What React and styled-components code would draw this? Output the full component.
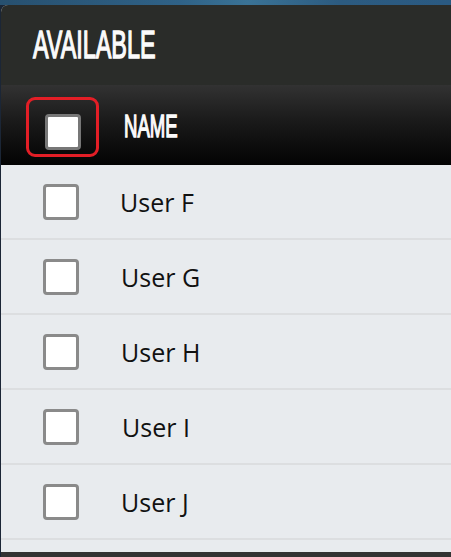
import React from 'react';
import styled, { createGlobalStyle } from 'styled-components';

const GlobalStyle = createGlobalStyle`
  html, body {
    margin: 0;
    padding: 0;
    background: #1b2636;
  }
  body {
    font-family: "Open Sans", "Liberation Sans", sans-serif;
    overflow: hidden;
  }
`;

const Page = styled.div`
  display: flex;
  flex-direction: column;
  width: 451px;
  height: 557px;
  overflow: hidden;
`;

const TopStrip = styled.div`
  height: 5px;
  flex: 0 0 5px;
  background: linear-gradient(90deg, #27506f 0%, #2f6287 40%, #3a7396 55%, #2c5b80 75%, #2a5a82 100%);
`;

const Panel = styled.div`
  display: flex;
  flex-direction: column;
  margin-left: 1px;
  border-top-left-radius: 7px;
  overflow: hidden;
  background: #e8ebee;
  flex: 1;
`;

const TitleBar = styled.div`
  height: 80px;
  display: flex;
  align-items: center;
  padding-left: 32px;
  background: #2a2c29;
`;

const Condensed = styled.span`
  display: inline-block;
  font-family: "Liberation Sans", Arial, sans-serif;
  font-weight: 400;
  color: #fbfbfb;
  -webkit-text-stroke: 1.4px #fbfbfb;
  white-space: nowrap;
  line-height: 1;
  transform-origin: left center;
  font-size: ${(p) => p.size}px;
  transform: scaleX(${(p) => p.squeeze});
`;

const HeaderRow = styled.div`
  height: 80px;
  display: flex;
  align-items: flex-start;
  background: linear-gradient(180deg, #323232 0%, #1a1a1a 45%, #030303 100%);
`;

const HeaderCheckCell = styled.div`
  position: relative;
  width: 36px;
  margin: 29px 0 0 44px;
`;

const HeaderLabel = styled.div`
  margin: 26px 0 0 43px;
`;

const Highlight = styled.span`
  position: absolute;
  top: -17px;
  left: -19px;
  right: -18px;
  bottom: -7px;
  border: 3px solid #e31e26;
  border-radius: 9px;
  pointer-events: none;
`;

const Box = styled.span`
  display: block;
  box-sizing: border-box;
  width: 36px;
  height: 36px;
  background: #ffffff;
  border: 3px solid ${(p) => (p.dark ? '#777777' : '#8a8a8a')};
  border-radius: 4px;
`;

const Row = styled.div`
  box-sizing: border-box;
  height: 75px;
  display: flex;
  align-items: center;
  padding-left: 42px;
  border-bottom: 2px solid #dcdee0;
`;

const RowName = styled.span`
  margin-left: ${(p) => 41 + (p.nudge || 0)}px;
  font-size: 25px;
  color: #111111;
  padding-top: 1px;
`;

const Spacer = styled.div`
  flex: 1;
`;

const Footer = styled.div`
  height: 5px;
  background: #333333;
`;

const users = [
  { name: 'User F', nudge: 0 },
  { name: 'User G', nudge: 1 },
  { name: 'User H', nudge: 1 },
  { name: 'User I', nudge: 2 },
  { name: 'User J', nudge: 1 },
];

const App = () => (
  <>
    <GlobalStyle />
    <Page>
      <TopStrip />
      <Panel>
        <TitleBar>
          <Condensed size={38} squeeze={0.615}>AVAILABLE</Condensed>
        </TitleBar>
        <HeaderRow>
          <HeaderCheckCell>
            <Box dark />
            <Highlight />
          </HeaderCheckCell>
          <HeaderLabel>
            <Condensed size={31} squeeze={0.6}>NAME</Condensed>
          </HeaderLabel>
        </HeaderRow>
        {users.map((u) => (
          <Row key={u.name}>
            <Box />
            <RowName nudge={u.nudge}>{u.name}</RowName>
          </Row>
        ))}
        <Spacer />
        <Footer />
      </Panel>
    </Page>
  </>
);

export default App;
